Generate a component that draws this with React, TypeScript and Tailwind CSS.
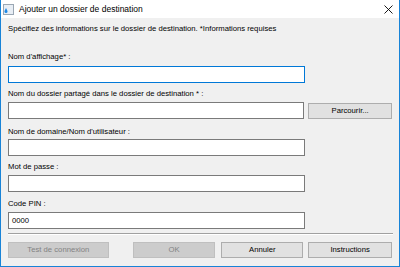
import React from 'react';

const font = { fontFamily: '"Liberation Sans", Arial, sans-serif' };

function WindowIcon() {
  return (
    <svg width="11" height="11" viewBox="0 0 11 11">
      <rect x="0.5" y="0.5" width="10" height="10" fill="#e8eef5" stroke="#9aa7b4" />
      <path d="M3 4 C3 4 1.5 6.5 1.5 7.6 A1.5 1.5 0 0 0 4.5 7.6 C4.5 6.5 3 4 3 4 Z" fill="#1e88e5" />
    </svg>
  );
}

function Field({
  label,
  mt,
  inputMt,
  value = '',
  focused = false,
  browse = false,
}: {
  label: string;
  mt: string;
  inputMt: string;
  value?: string;
  focused?: boolean;
  browse?: boolean;
}) {
  return (
    <div className={mt}>
      <div className="h-[10px] leading-[10px] text-[7.7px] text-black">{label}</div>
      <div className={`${inputMt} flex items-center gap-[4px]`}>
        <div
          className={`w-[297px] h-[17px] bg-white border flex items-center px-[3px] text-[7.7px] text-black ${
            focused ? 'border-[#0078d7]' : 'border-[#7a7a7a]'
          }`}
        >
          {value}
        </div>
        {browse && (
          <div className="w-[84px] h-[16px] bg-[#e1e1e1] border border-[#adadad] flex items-center justify-center text-[7.7px] text-black">
            Parcourir...
          </div>
        )}
      </div>
    </div>
  );
}

export default function App() {
  return (
    <div className="w-[400px] h-[267px] bg-[#f0f0f0] flex flex-col border-x border-b border-[#1883d7]" style={font}>
      {/* barre de titre */}
      <div className="h-[18px] bg-white flex items-center pl-[2px] pr-[6px] shrink-0">
        <WindowIcon />
        <span className="ml-[5px] text-[8.5px] text-black leading-none">Ajouter un dossier de destination</span>
        <svg className="ml-auto" width="9" height="9" viewBox="0 0 9 9">
          <path d="M0.5 0.5 L8.5 8.5 M8.5 0.5 L0.5 8.5" stroke="#000" strokeWidth="0.9" />
        </svg>
      </div>

      <div className="px-[7px] flex flex-col">
        <div className="mt-[6px] h-[10px] leading-[10px] text-[7.7px] text-black">
          Spécifiez des informations sur le dossier de destination. *Informations requises
        </div>

        <Field label="Nom d'affichage* :" mt="mt-[18px]" inputMt="mt-[4px]" focused />
        <Field
          label="Nom du dossier partagé dans le dossier de destination * :"
          mt="mt-[6px]"
          inputMt="mt-[3px]"
          browse
        />
        <Field label="Nom de domaine/Nom d'utilisateur :" mt="mt-[8px]" inputMt="mt-[2px]" />
        <Field label="Mot de passe :" mt="mt-[6px]" inputMt="mt-[3px]" />
        <Field label="Code PIN :" mt="mt-[7px]" inputMt="mt-[3px]" value="0000" />

        {/* séparateur */}
        <div className="mt-[4px] w-[385px] border-t border-[#a0a0a0] border-b border-b-white" />

        <div className="mt-[7px] flex items-center text-[7.7px]">
          <div className="w-[101px] h-[16px] bg-[#cccccc] border border-[#bfbfbf] text-[#838383] flex items-center justify-center">
            Test de connexion
          </div>
          <div className="ml-[24px] w-[83px] h-[16px] bg-[#cccccc] border border-[#bfbfbf] text-[#838383] flex items-center justify-center">
            OK
          </div>
          <div className="ml-[6px] w-[82px] h-[16px] bg-[#e1e1e1] border border-[#adadad] text-black flex items-center justify-center">
            Annuler
          </div>
          <div className="ml-[5px] w-[84px] h-[16px] bg-[#e1e1e1] border border-[#adadad] text-black flex items-center justify-center">
            Instructions
          </div>
        </div>
      </div>
    </div>
  );
}
